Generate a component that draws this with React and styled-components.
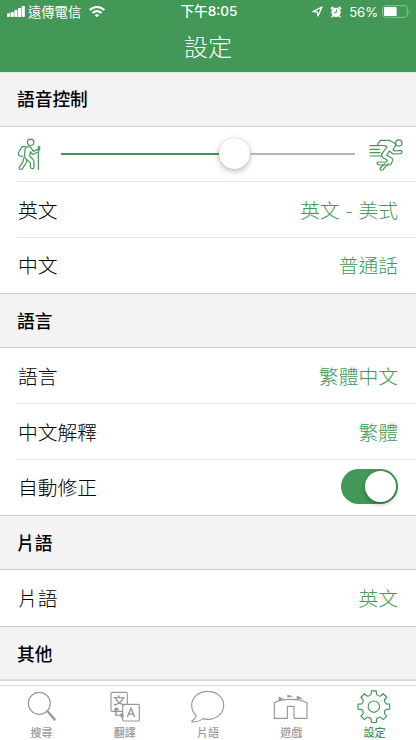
import React from "react";
import styled, { createGlobalStyle } from "styled-components";

const GREEN = "#439857";

const GlobalStyle = createGlobalStyle`
  * {
    box-sizing: border-box;
  }

  body {
    margin: 0;
    background: #ffffff;
    font-family: "Noto Sans CJK TC", "Noto Sans", sans-serif;
    overflow: hidden;
  }
`;

const gearPoint = (r, deg) => {
  const a = (deg * Math.PI) / 180;
  return `${(162.5 + r * Math.cos(a)).toFixed(1)} ${(80 + r * Math.sin(a)).toFixed(1)}`;
};

const gearPath = () => {
  let d = `M${gearPoint(38, -102)}`;
  for (let i = 0; i < 8; i++) {
    const c = i * 45 - 90;
    d += `L${gearPoint(48, c - 9)}L${gearPoint(48, c + 9)}L${gearPoint(38, c + 12)}`;
    d += `Q${gearPoint(33, c + 22.5)} ${gearPoint(38, c + 33)}`;
  }
  return `${d}Z`;
};

const WalkIcon = () => (
  <LineIcon width="26" height="34" viewBox="48 195 78 102">
    <circle cx="92" cy="211" r="9.5" />
    <path d="M76 224q-9-3-13 5l-8 15q-1 7 6 8l7 1" />
    <path d="M75 231q3-7 10-7q7 0 10 6l5 8l11-5q7 0 5 6l-16 8q-4 0-7-5l-2-3l-2 13l10 10q3 4 3 10v13q-1 6-6 5q-4 0-5-5v-13l-13-11q-5-5-4-12z" />
    <path d="M72 257l-3 12l-11 17q-1 6 4 6q4 1 6-3l10-16l3-8" />
    <path d="M115 222v10M115 242v50M119 224v9" />
  </LineIcon>
);

const RunIcon = () => (
  <LineIcon width="36" height="34" viewBox="480 195 108 102">
    <circle cx="572.5" cy="213" r="9.5" />
    <path d="M486 221h29M486 232h28M486 242h30M486 252h36" />
    <path d="M516 205h27l16 8q6 4 3 9l-7 11l5 4l16-2q7 0 6 5q0 4-5 5l-22 1l-11-9l-8 12l15 9q5 3 3 8l-5 10q-2 3-7 3h-29q-6-1-6-5q0-4 6-4h22l3-5l-13-8q-7-5-3-12l15-20l-5-4l-18-1q-5-1-5-4q0-4 5-4z" />
    <path d="M530 275l-13 13q-2 4 1 6q4 2 7-1l16-18" />
  </LineIcon>
);

const SearchIcon = () => (
  <TabIcon viewBox="65 24 120 108">
    <circle cx="117" cy="70" r="33" />
    <path d="M139 95l4-4l24 27l-5 5z" fill="currentColor" strokeWidth="1" />
  </TabIcon>
);

const TranslateIcon = () => (
  <TabIcon viewBox="314 24 120 108">
    <path d="M366 94h-30q-4 0-4-4V41q0-4 4-4h41q4 0 4 4v32" />
    <path d="M371 73h42q4 0 4 4v42q0 4-4 4h-42q-4 0-4-4V77q0-4 4-4z" />
    <path d="M340 53h33M354 46l3 6M345 54q8 17 28 21M369 54q-7 17-28 21" strokeWidth="4" />
    <path d="M381 111l11-27l11 27M385 102h14" strokeWidth="4.5" />
    <path d="M347 85v21h6M342 91l6-7l7 7M355 106h13M361 100l8 6l-8 6" strokeWidth="4.5" />
  </TabIcon>
);

const BubbleIcon = () => (
  <TabIcon viewBox="84 24 120 108">
    <path d="M143 34c27 0 48 18 48 42s-21 42-48 42q-8 0-14-2q-12 10-32 10q-3-1 0-4q9-5 12-15q-14-12-14-31c0-24 21-42 48-42z" />
  </TabIcon>
);

const GameIcon = () => (
  <TabIcon viewBox="334 24 120 108">
    <path d="M344 115V68q18-10 49-10t49 10v47h-39V79h-20v36z" />
    <path d="M358 61V51l13 6zM384 52V45l13 4zM412 58V48l15 7z" fill="currentColor" strokeWidth="2" />
  </TabIcon>
);

const GearIcon = () => (
  <TabIcon viewBox="103 24 120 108">
    <path d={gearPath()} />
    <circle cx="162.5" cy="80" r="17" />
  </TabIcon>
);

const tabs = [
  { label: "搜尋", icon: <SearchIcon /> },
  { label: "翻譯", icon: <TranslateIcon /> },
  { label: "片語", icon: <BubbleIcon /> },
  { label: "遊戲", icon: <GameIcon /> },
  { label: "設定", icon: <GearIcon />, active: true },
];

const App = () => {
  return (
    <Screen>
      <GlobalStyle />
      <Header>
        <StatusBar>
          <StatusLeft>
            <svg width="18" height="12" viewBox="0 0 54 36" fill="#fff">
              <rect x="0" y="22" width="9.5" height="11" rx="2" />
              <rect x="11" y="18" width="9.5" height="15" rx="2" />
              <rect x="22" y="12" width="9.5" height="21" rx="2" />
              <rect x="33" y="6" width="9.5" height="27" rx="2" />
              <rect x="44" y="0" width="9.5" height="33" rx="2" />
            </svg>
            <Carrier>遠傳電信</Carrier>
            <svg width="16" height="12" viewBox="0 0 48 36" fill="none" stroke="#fff" strokeWidth="6.5">
              <path d="M2 12q22-18 44 0" />
              <path d="M10 21q14-11 28 0" />
              <path d="M17 27q7-5 14 0l-7 7z" fill="#fff" stroke="none" />
            </svg>
          </StatusLeft>
          <Time>下午8:05</Time>
          <StatusRight>
            <svg width="11" height="11" viewBox="0 0 33 33" fill="none" stroke="#fff" strokeWidth="4">
              <path d="M3 17L30 3L18 30L16 18z" strokeLinejoin="round" />
            </svg>
            <AlarmSvg width="12" height="12" viewBox="0 0 36 36">
              <circle cx="18" cy="19" r="14" fill="#fff" />
              <path d="M3 9l7-6M33 9l-7-6M8 30l-3 4M28 30l3 4" stroke="#fff" strokeWidth="5" />
              <path d="M19 10v10h-8" stroke={GREEN} strokeWidth="3" fill="none" />
            </AlarmSvg>
            <Percent>56%</Percent>
            <svg width="29" height="13" viewBox="0 0 87 39">
              <rect x="2" y="2" width="74" height="35" rx="8" fill="none" stroke="#85c494" strokeWidth="3" />
              <rect x="6" y="6" width="38" height="27" rx="3" fill="#fff" />
              <path d="M80 13q6 6 0 13z" fill="#85c494" />
            </svg>
          </StatusRight>
        </StatusBar>
        <Title>設定</Title>
      </Header>

      <Content>
        <SectionHeader $first>語音控制</SectionHeader>
        <SliderRow>
          <WalkIcon />
          <Track>
            <TrackFill />
            <Thumb />
            <TrackRest />
          </Track>
          <RunIcon />
        </SliderRow>
        <Row $divided>
          <Label>英文</Label>
          <Value $spaced>英文 - 美式</Value>
        </Row>
        <Row $divided>
          <Label>中文</Label>
          <Value>普通話</Value>
        </Row>

        <SectionHeader>語言</SectionHeader>
        <Row>
          <Label>語言</Label>
          <Value>繁體中文</Value>
        </Row>
        <Row $divided>
          <Label>中文解釋</Label>
          <Value>繁體</Value>
        </Row>
        <Row $divided>
          <Label>自動修正</Label>
          <Switch>
            <Knob />
          </Switch>
        </Row>

        <SectionHeader>片語</SectionHeader>
        <Row>
          <Label>片語</Label>
          <Value>英文</Value>
        </Row>

        <SectionHeader $last>其他</SectionHeader>
      </Content>

      <TabBar>
        {tabs.map((tab) => (
          <Tab key={tab.label} $active={tab.active}>
            {tab.icon}
            <TabLabel>{tab.label}</TabLabel>
          </Tab>
        ))}
      </TabBar>
    </Screen>
  );
};

export default App;

const Screen = styled.div`
  display: flex;
  flex-direction: column;
  width: 416px;
  height: 740px;
  background: #ffffff;
  overflow: hidden;
`;

const Header = styled.header`
  flex: none;
  height: 73px;
  background: ${GREEN};
  border-bottom: 1px solid #d3f5d5;
  color: #ffffff;
`;

const StatusBar = styled.div`
  display: grid;
  grid-template-columns: 1fr auto 1fr;
  align-items: center;
  height: 23px;
  padding: 0 5px 0 7px;
`;

const StatusLeft = styled.div`
  display: flex;
  align-items: center;
`;

const Carrier = styled.span`
  margin: 0 8px 0 3px;
  font-size: 13.3px;
  line-height: 23px;
`;

const Time = styled.span`
  font-family: "Inter", "Noto Sans CJK TC", sans-serif;
  font-size: 13.6px;
  font-weight: 500;
  line-height: 23px;
`;

const StatusRight = styled.div`
  display: flex;
  align-items: center;
  justify-content: flex-end;
`;

const AlarmSvg = styled.svg`
  margin: 0 7px 0 7px;
`;

const Percent = styled.span`
  margin-right: 4px;
  font-family: "Inter", sans-serif;
  font-size: 13.2px;
  letter-spacing: -0.1px;
`;

const Title = styled.h1`
  margin: 0;
  font-size: 24px;
  font-weight: 300;
  line-height: 46px;
  text-align: center;
`;

const Content = styled.main`
  flex: none;
  height: 612px;
  overflow: hidden;
`;

const SectionHeader = styled.h2`
  display: flex;
  align-items: center;
  height: ${({ $first }) => ($first ? "54px" : "55.3px")};
  margin: 0;
  padding: 0 17px ${({ $first }) => ($first ? "3px" : "0")};
  background: #f3f3f3;
  border-top: ${({ $first }) => ($first ? "none" : "1px solid #cbcbcb")};
  border-bottom: ${({ $last }) => ($last ? "2px solid #dcdcdc" : "1px solid #cbcbcb")};
  font-size: 17.7px;
  font-weight: 500;
  line-height: 26px;
  color: #000000;
`;

const Row = styled.div`
  display: flex;
  align-items: center;
  justify-content: space-between;
  height: 55.6px;
  margin-left: 17px;
  padding: 0 18px 0 1px;
  border-top: 1px solid ${({ $divided }) => ($divided ? "#e6e6e6" : "transparent")};
`;

const Label = styled.span`
  font-size: 19.8px;
  font-weight: 300;
  line-height: 30px;
  color: #000000;
`;

const Value = styled(Label)`
  color: ${GREEN};
  word-spacing: ${({ $spaced }) => ($spaced ? "1.8px" : "normal")};
`;

const SliderRow = styled.div`
  display: flex;
  align-items: center;
  height: 54.4px;
  padding: 0 12px 0 16px;
`;

const LineIcon = styled.svg`
  flex: none;
  fill: none;
  stroke: ${GREEN};
  stroke-width: 3.6;
  stroke-linecap: round;
  stroke-linejoin: round;
`;

const Track = styled.div`
  display: flex;
  align-items: center;
  flex: 1;
  margin: 0 13px 0 19px;
`;

const TrackFill = styled.div`
  width: 158px;
  height: 2px;
  background: ${GREEN};
`;

const TrackRest = styled.div`
  flex: 1;
  height: 2px;
  background: #b5b5b5;
`;

const Thumb = styled.div`
  width: 31px;
  height: 31px;
  margin-top: -2px;
  border-radius: 50%;
  background: #ffffff;
  box-shadow: 0 2px 6px rgba(0, 0, 0, 0.28), 0 0 1px rgba(0, 0, 0, 0.2);
`;

const Switch = styled.div`
  display: flex;
  align-items: center;
  justify-content: flex-end;
  width: 57px;
  height: 35px;
  margin-top: -1px;
  padding-right: 2px;
  border-radius: 18px;
  background: ${GREEN};
`;

const Knob = styled.div`
  width: 31px;
  height: 31px;
  border-radius: 50%;
  background: #ffffff;
  box-shadow: 0 2px 5px rgba(0, 0, 0, 0.3);
`;

const TabBar = styled.nav`
  display: grid;
  grid-template-columns: repeat(5, 1fr);
  flex: 1;
  padding-top: 2px;
  background: #ffffff;
  border-top: 1px solid #d8d8d8;
`;

const Tab = styled.div`
  display: flex;
  flex-direction: column;
  align-items: center;
  color: ${({ $active }) => ($active ? GREEN : "#999999")};
`;

const TabIcon = styled.svg`
  width: 40px;
  height: 36px;
  fill: none;
  stroke: currentColor;
  stroke-width: 3.5;
  stroke-linejoin: round;
`;

const TabLabel = styled.span`
  font-size: 11px;
  font-weight: 500;
  line-height: 16px;
`;
